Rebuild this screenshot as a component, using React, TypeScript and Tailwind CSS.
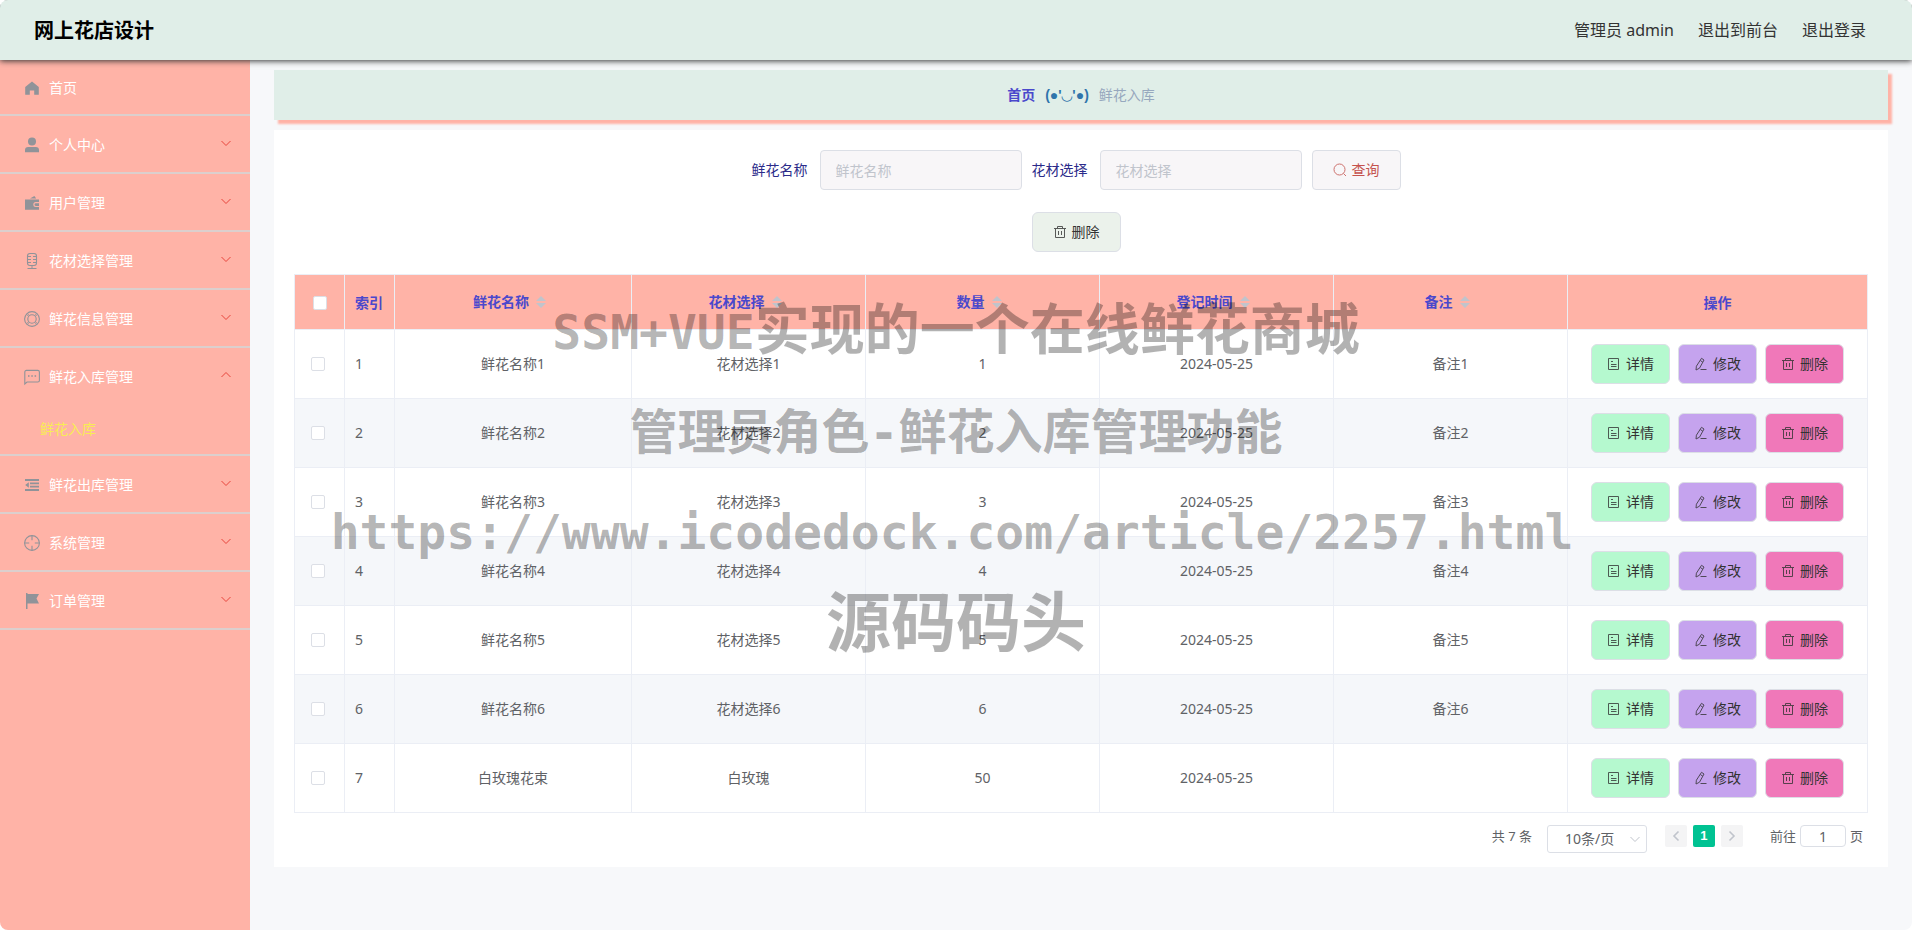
import React, { useState } from 'react'

interface MenuItem {
  name: string
  icon: React.ReactNode
  children?: string[]
}

interface StockRow {
  id: number
  name: string
  material: string
  count: number
  date: string
  remark: string
}

interface IconProps {
  children: React.ReactNode
}

const MenuIcon: React.FC<IconProps> = ({ children }) => (
  <svg
    className="h-[18px] w-[18px]"
    viewBox="0 0 18 18"
    fill="none"
    stroke="currentColor"
    strokeWidth="1.1"
    aria-hidden="true"
  >
    {children}
  </svg>
)

const ButtonIcon: React.FC<IconProps> = ({ children }) => (
  <svg
    className="h-3.5 w-3.5 opacity-80"
    viewBox="0 0 14 14"
    fill="none"
    stroke="currentColor"
    strokeWidth="1"
    aria-hidden="true"
  >
    {children}
  </svg>
)

const menu: MenuItem[] = [
  {
    name: '首页',
    icon: (
      <path
        d="M9 2.6 2.2 8v7.8h4.6v-4.3h4.4v4.3h4.6V8z"
        fill="currentColor"
        stroke="none"
      />
    ),
  },
  {
    name: '个人中心',
    icon: (
      <g fill="currentColor" stroke="none">
        <circle cx="9" cy="5.4" r="4" />
        <path d="M2 16.3v-2.2a3.2 3.2 0 0 1 3.2-3.2h7.6a3.2 3.2 0 0 1 3.2 3.2v2.2z" />
      </g>
    ),
    children: ['个人中心'],
  },
  {
    name: '用户管理',
    icon: (
      <g fill="currentColor" stroke="none">
        <path d="M7 4.6 11.4 2l1.8 2.6z" />
        <path d="M2 5.4h14v2.7h-3.2a2.5 2.5 0 0 0 0 5H16v2.7H2z" />
        <path d="M12.8 9.3H16v2.6h-3.2a1.3 1.3 0 0 1 0-2.6z" />
      </g>
    ),
    children: ['用户'],
  },
  {
    name: '花材选择管理',
    icon: (
      <>
        <rect x="4.5" y="1.5" width="9" height="12" rx="2.5" />
        <path
          d="M5 4.5h3M10 4.5h3M5 7.500h3M10 7.500h3M5 10.500h3M10 10.500h3M9 13.500v3M4.500 16.500h9"
          strokeWidth="1"
        />
      </>
    ),
    children: ['花材选择'],
  },
  {
    name: '鲜花信息管理',
    icon: (
      <>
        <circle cx="9" cy="9" r="7.4" />
        <circle cx="9" cy="9" r="4.2" />
        <path
          d="m4.300 3.400 2.200 2.400M3.400 4.300l2.400 2.200M13.700 3.400l-2.200 2.400M14.600 4.300l-2.400 2.200M4.300 14.600l2.200-2.400M3.400 13.700l2.400-2.200M13.700 14.600l-2.200-2.400M14.600 13.700l-2.400-2.200"
          strokeWidth="0.8"
        />
      </>
    ),
    children: ['鲜花信息'],
  },
  {
    name: '鲜花入库管理',
    icon: (
      <>
        <path d="M1.800 16V4a1.600 1.600 0 0 1 1.600-1.600h11.400A1.600 1.600 0 0 1 16.400 4v8.400a1.600 1.600 0 0 1-1.600 1.600H4z" />
        <path d="M5 8h1.500M8.300 8h1.500M11.600 8h1.500" strokeWidth="1.500" />
      </>
    ),
    children: ['鲜花入库'],
  },
  {
    name: '鲜花出库管理',
    icon: (
      <>
        <path d="M2 4h14M7 7.400h9M7 10.600h9M2 14h14" strokeWidth="1.800" />
        <path d="M5.800 6.200v5.600L2.200 9z" fill="currentColor" stroke="none" />
      </>
    ),
    children: ['鲜花出库'],
  },
  {
    name: '系统管理',
    icon: (
      <>
        <circle cx="9" cy="9" r="7.400" />
        <path d="M9 1.700v4.500M9 11.800v4.500M1.700 9h4.500M11.800 9h4.500" />
      </>
    ),
    children: ['系统管理'],
  },
  {
    name: '订单管理',
    icon: (
      <path
        d="M3 1h1.500v1H16l-2.500 4.500L16 11.500H4.500V17H3z"
        fill="currentColor"
        stroke="none"
      />
    ),
    children: ['订单'],
  },
]

const rows: StockRow[] = [
  ...[1, 2, 3, 4, 5, 6].map((n) => ({
    id: n,
    name: `鲜花名称${n}`,
    material: `花材选择${n}`,
    count: n,
    date: '2024-05-25',
    remark: `备注${n}`,
  })),
  {
    id: 7,
    name: '白玫瑰花束',
    material: '白玫瑰',
    count: 50,
    date: '2024-05-25',
    remark: '',
  },
]

const columns: string[] = ['鲜花名称', '花材选择', '数量', '登记时间', '备注']

const TrashIcon = () => (
  <ButtonIcon>
    <path d="M1 3.500h12M4.500 3.500v-2h5v2M2.500 3.500v9h9v-9M5.500 6v4M8.500 6v4" />
  </ButtonIcon>
)

const DetailIcon = () => (
  <ButtonIcon>
    <path d="M1.500 1.500h10v11h-10zM4 4.500h2M4 7.500h5.500M4 9.500h5.500" />
  </ButtonIcon>
)

const EditIcon = () => (
  <ButtonIcon>
    <path d="M7.500 1.300 10 3 5.500 11.200 2 13l.4-3.800zM6.300 3.500l2.500 1.700M6.500 12.500h6" />
  </ButtonIcon>
)

const Checkbox: React.FC<{
  label: string
  checked: boolean
  onChange: () => void
}> = ({ label, checked, onChange }) => (
  <input
    type="checkbox"
    aria-label={label}
    checked={checked}
    onChange={onChange}
    className="block h-3.5 w-3.5 appearance-none rounded-xs border border-[#dcdfe6] bg-white checked:border-[#00c292] checked:bg-[#00c292]"
  />
)

const actionClass =
  'flex h-10 items-center gap-[5px] rounded-md border border-[#dcdfe6] px-[15px] text-sm text-[#333]'

const Sidebar: React.FC = () => {
  const [open, setOpen] = useState<string>('鲜花入库管理')

  return (
    <nav className="w-[250px] shrink-0 bg-[#ffb3a7] text-sm">
      {menu.map(({ name, icon, children }) => (
        <div key={name} className="border-b-2 border-[#dccfcd]">
          <button
            className={`flex w-full items-center pt-0.5 pr-[18px] pl-5 text-white ${
              children ? 'h-14' : 'h-[54px]'
            }`}
            onClick={() => setOpen(open === name ? '' : name)}
          >
            <span className="mr-[5px] flex w-6 justify-center text-[#909399]">
              <MenuIcon>{icon}</MenuIcon>
            </span>
            {name}
            {children && (
              <svg
                className="mb-1 ml-auto h-3 w-3 text-[#e8453c]"
                viewBox="0 0 12 12"
                fill="none"
                stroke="currentColor"
                aria-hidden="true"
              >
                <path d={open === name ? 'M1.500 8 6 3.500 10.500 8' : 'M1.500 4 6 8.500 10.500 4'} />
              </svg>
            )}
          </button>
          {open === name &&
            children?.map((child) => (
              <a
                key={child}
                href="#"
                className="flex h-[50px] items-center pl-10 text-[#f8ec55]"
              >
                {child}
              </a>
            ))}
        </div>
      ))}
    </nav>
  )
}

const SearchField: React.FC<{ id: string; label: string }> = ({
  id,
  label,
}) => (
  <div className="flex items-center gap-3">
    <label htmlFor={id} className="text-[#2b2b8a]">
      {label}
    </label>
    <input
      id={id}
      placeholder={label}
      className="h-10 w-[202px] rounded border border-[#dcdfe6] bg-[#f8f6f8] px-[15px] placeholder:text-[#c0c4cc]"
    />
  </div>
)

const StockTable: React.FC = () => {
  const [selected, setSelected] = useState<number[]>([])

  const toggle = (id: number) => {
    setSelected(
      selected.includes(id)
        ? selected.filter((s) => s !== id)
        : [...selected, id]
    )
  }

  const allSelected = selected.length === rows.length

  return (
    <table className="w-full table-fixed border-collapse text-center text-sm text-[#606266]">
      <colgroup>
        <col className="w-[50px]" />
        <col className="w-[50px]" />
        <col className="w-[237px]" />
        {columns.slice(1).map((c) => (
          <col key={c} />
        ))}
        <col className="w-[300px]" />
      </colgroup>
      <thead>
        <tr className="h-[55px] bg-[#ffb3a7] text-[#4a48cc]">
          <th className="border border-[#ebeef5] pt-0.5 pl-[18px]">
            <Checkbox
              label="全选"
              checked={allSelected}
              onChange={() => setSelected(allSelected ? [] : rows.map((r) => r.id))}
            />
          </th>
          <th className="border border-[#ebeef5] pt-0.5 pl-2.5 text-left">索引</th>
          {columns.map((c) => (
            <th key={c} className="border border-[#ebeef5]">
              <button className="inline-flex items-center font-bold">
                {c}
                <svg
                  className="h-3.5 w-6 text-[#c0c4cc]"
                  viewBox="0 0 24 14"
                  fill="currentColor"
                  aria-hidden="true"
                >
                  <path d="M7 6h10l-5-5zM7 8h10l-5 5z" />
                </svg>
              </button>
            </th>
          ))}
          <th className="border border-[#ebeef5] pt-0.5">操作</th>
        </tr>
      </thead>
      <tbody>
        {rows.map((row) => (
          <tr key={row.id} className="h-[69px] even:bg-[#f5f7fa]">
            <td className="border border-[#ebeef5] pl-4">
              <Checkbox
                label={`选择 ${row.name}`}
                checked={selected.includes(row.id)}
                onChange={() => toggle(row.id)}
              />
            </td>
            <td className="border border-[#ebeef5] pl-2.5 text-left">{row.id}</td>
            <td className="border border-[#ebeef5]">{row.name}</td>
            <td className="border border-[#ebeef5]">{row.material}</td>
            <td className="border border-[#ebeef5]">{row.count}</td>
            <td className="border border-[#ebeef5]">{row.date}</td>
            <td className="border border-[#ebeef5]">{row.remark}</td>
            <td className="border border-[#ebeef5]">
              <div className="flex justify-center gap-2">
                <button className={`${actionClass} bg-[#b5f9cf]`}>
                  <DetailIcon />
                  详情
                </button>
                <button className={`${actionClass} bg-[#c5a3ee]`}>
                  <EditIcon />
                  修改
                </button>
                <button className={`${actionClass} bg-[#f078b9]`}>
                  <TrashIcon />
                  删除
                </button>
              </div>
            </td>
          </tr>
        ))}
      </tbody>
    </table>
  )
}

const Pagination: React.FC = () => {
  const [page, setPage] = useState<string>('1')

  return (
    <div className="flex items-start justify-end pt-3 pr-[5px] text-[13px] leading-[22px] text-[#606266]">
      <span className="mr-[15px]">共 7 条</span>
      <div className="relative mr-[18px]">
        <select
          aria-label="每页条数"
          className="h-7 w-[100px] appearance-none rounded-[3px] border border-[#dcdfe6] bg-white pl-[17px] text-sm"
        >
          <option>10条/页</option>
          <option>20条/页</option>
          <option>50条/页</option>
        </select>
        <svg
          className="pointer-events-none absolute top-2 right-[6px] h-3 w-3 text-[#c0c4cc]"
          viewBox="0 0 12 12"
          fill="none"
          stroke="currentColor"
          aria-hidden="true"
        >
          <path d="M1.500 4 6 8.500 10.500 4" />
        </svg>
      </div>
      <div className="mr-[27px] flex gap-1.5">
        <button
          aria-label="上一页"
          className="flex h-[22px] w-[22px] items-center justify-center rounded-xs bg-[#f4f4f5] text-[#c0c4cc]"
        >
          <svg className="h-3 w-3" viewBox="0 0 12 12" fill="none" stroke="currentColor" strokeWidth="1.600">
            <path d="M8.500 1.500 4 6l4.500 4.500" />
          </svg>
        </button>
        <button className="h-[22px] w-[22px] rounded-xs bg-[#00c292] font-['Liberation_Sans'] font-bold text-white">
          1
        </button>
        <button
          aria-label="下一页"
          className="flex h-[22px] w-[22px] items-center justify-center rounded-xs bg-[#f4f4f5] text-[#c0c4cc]"
        >
          <svg className="h-3 w-3" viewBox="0 0 12 12" fill="none" stroke="currentColor" strokeWidth="1.600">
            <path d="M3.500 1.500 8 6l-4.500 4.500" />
          </svg>
        </button>
      </div>
      <label className="flex items-center gap-1">
        前往
        <input
          value={page}
          onChange={(e) => setPage(e.target.value)}
          className="h-[22px] w-[46px] rounded border border-[#dcdfe6] text-center text-sm"
        />
        页
      </label>
    </div>
  )
}

const Watermark: React.FC = () => (
  <div className="pointer-events-none absolute inset-x-0 top-[294px] flex flex-col items-center font-['DejaVu_Sans_Mono','Noto_Sans_CJK_SC',monospace] text-5xl font-bold whitespace-nowrap text-black/30">
    <p className="leading-[72px]">
      SSM+VUE<span className="text-[55px]">实现的一个在线鲜花商城</span>
    </p>
    <p className="mt-7 leading-[72px]">管理员角色-鲜花入库管理功能</p>
    <p className="mt-7 pr-2 leading-[72px]">
      https://www.icodedock.com/article/2257.html
    </p>
    <p className="mt-5 text-[65px] leading-[72px]">源码码头</p>
  </div>
)

const App: React.FC = () => {
  return (
    <div className="relative flex min-h-screen flex-col overflow-hidden rounded-lg bg-[#f7f8fa] font-['Noto_Sans','Noto_Sans_CJK_SC',sans-serif]">
      <header className="relative z-10 flex h-[60px] items-center justify-between bg-[#e0eee8] pr-[46px] pl-[34px] shadow-[0_1px_6px_#333]">
        <h1 className="pt-0.5 text-xl font-bold text-black">网上花店设计</h1>
        <div className="flex gap-6 text-base text-[#333]">
          <span>管理员 admin</span>
          <a href="#">退出到前台</a>
          <a href="#">退出登录</a>
        </div>
      </header>
      <div className="flex flex-1">
        <Sidebar />
        <main className="min-w-0 flex-1 px-6 pt-2.5 text-sm">
          <div className="flex h-[50px] items-center justify-center gap-2.5 bg-[#e0eee8] shadow-[4px_4px_2px_#ffb3a7]">
            <a href="#" className="font-bold text-[#4a48cc]">
              首页
            </a>
            <span className="font-['Liberation_Sans','DejaVu_Sans',sans-serif] font-bold text-[#2f74ab]">
              (●'◡'●)
            </span>
            <span className="text-[#97a8be]">鲜花入库</span>
          </div>
          <section className="mt-2.5 bg-white px-5 pt-5 pb-[14px]">
            <form
              className="flex justify-center gap-2.5 pr-2.5"
              onSubmit={(e) => e.preventDefault()}
            >
              <SearchField id="flowerName" label="鲜花名称" />
              <SearchField id="material" label="花材选择" />
              <button className="flex h-10 items-center gap-[5px] rounded border border-[#dcdfe6] bg-[#f8f6f8] px-5 text-[#c4524d]">
                <ButtonIcon>
                  <circle cx="6.500" cy="6.500" r="5.500" />
                  <path d="m10.500 10.500 2.500 2.500" />
                </ButtonIcon>
                查询
              </button>
            </form>
            <div className="mt-[22px] mb-[22px] flex justify-center pr-2.5">
              <button className="flex h-10 items-center gap-[5px] rounded-md border border-[#dcdfe6] bg-[#ebf2eb] px-5 text-[#333]">
                <TrashIcon />
                删除
              </button>
            </div>
            <StockTable />
            <Pagination />
          </section>
        </main>
      </div>
      <Watermark />
    </div>
  )
}

export default App
